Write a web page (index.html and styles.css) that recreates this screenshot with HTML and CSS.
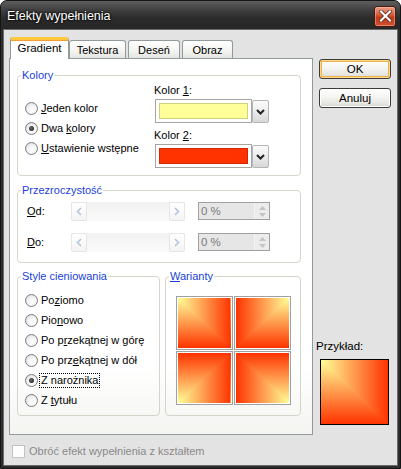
FILE: index.html
```html
<!DOCTYPE html>
<html lang="pl">
<head>
<meta charset="utf-8">
<title>Efekty wypełnienia</title>
<link rel="stylesheet" href="styles.css">
</head>
<body>
<div class="window">
  <div class="titlebar">
    <span class="title">Efekty wypełnienia</span>
    <button class="close" aria-label="Zamknij">
      <svg width="13" height="12" viewBox="0 0 13 12"><path d="M2 1.5 L11 10.5 M11 1.5 L2 10.5" stroke="#5a1a0c" stroke-width="3.6" stroke-linecap="square"/><path d="M2 1.5 L11 10.5 M11 1.5 L2 10.5" stroke="#fff" stroke-width="2.2" stroke-linecap="square"/></svg>
    </button>
  </div>
  <div class="client">
    <div class="main">
      <div class="left">
        <div class="tabs">
          <div class="tab active">Gradient</div>
          <div class="tab t2">Tekstura</div>
          <div class="tab t3">Deseń</div>
          <div class="tab t4">Obraz</div>
        </div>
        <div class="panel">
          <fieldset class="group kolory">
            <legend>Kolory</legend>
            <div class="kolory-body">
              <div class="radios">
                <div class="radio"><span class="dot"></span><span><u>J</u>eden kolor</span></div>
                <div class="radio"><span class="dot on"></span><span>Dwa <u>k</u>olory</span></div>
                <div class="radio"><span class="dot"></span><span><u>U</u>stawienie wstępne</span></div>
              </div>
              <div class="colors">
                <div class="clabel">Kolor <u>1</u>:</div>
                <div class="combo">
                  <div class="field"><span class="swatch yellow"></span></div>
                  <div class="drop"><svg width="9" height="6" viewBox="0 0 9 6"><path d="M1 1 L4.5 4.5 L8 1" fill="none" stroke="#222" stroke-width="2"/></svg></div>
                </div>
                <div class="clabel second">Kolor <u>2</u>:</div>
                <div class="combo">
                  <div class="field"><span class="swatch red"></span></div>
                  <div class="drop"><svg width="9" height="6" viewBox="0 0 9 6"><path d="M1 1 L4.5 4.5 L8 1" fill="none" stroke="#222" stroke-width="2"/></svg></div>
                </div>
              </div>
            </div>
          </fieldset>

          <fieldset class="group przez">
            <legend>Przezroczystość</legend>
            <div class="przez-body">
              <div class="trow">
                <span class="tlabel"><u>O</u>d:</span>
                <div class="scroll">
                  <span class="sbtn"><svg width="6" height="9" viewBox="0 0 6 9"><path d="M5 1 L1.5 4.5 L5 8" fill="none" stroke="#b4c4dc" stroke-width="1.6"/></svg></span>
                  <span class="strack"></span>
                  <span class="sbtn"><svg width="6" height="9" viewBox="0 0 6 9"><path d="M1 1 L4.5 4.5 L1 8" fill="none" stroke="#b4c4dc" stroke-width="1.6"/></svg></span>
                </div>
                <div class="spin">
                  <span class="spintext">0 %</span>
                  <span class="spinbtns">
                    <svg width="7" height="4" viewBox="0 0 7 4"><path d="M0 4 L3.5 0 L7 4 Z" fill="#c4c4c4"/></svg>
                    <svg width="7" height="4" viewBox="0 0 7 4"><path d="M0 0 L3.5 4 L7 0 Z" fill="#c4c4c4"/></svg>
                  </span>
                </div>
              </div>
              <div class="trow">
                <span class="tlabel"><u>D</u>o:</span>
                <div class="scroll">
                  <span class="sbtn"><svg width="6" height="9" viewBox="0 0 6 9"><path d="M5 1 L1.5 4.5 L5 8" fill="none" stroke="#b4c4dc" stroke-width="1.6"/></svg></span>
                  <span class="strack"></span>
                  <span class="sbtn"><svg width="6" height="9" viewBox="0 0 6 9"><path d="M1 1 L4.5 4.5 L1 8" fill="none" stroke="#b4c4dc" stroke-width="1.6"/></svg></span>
                </div>
                <div class="spin">
                  <span class="spintext">0 %</span>
                  <span class="spinbtns">
                    <svg width="7" height="4" viewBox="0 0 7 4"><path d="M0 4 L3.5 0 L7 4 Z" fill="#c4c4c4"/></svg>
                    <svg width="7" height="4" viewBox="0 0 7 4"><path d="M0 0 L3.5 4 L7 0 Z" fill="#c4c4c4"/></svg>
                  </span>
                </div>
              </div>
            </div>
          </fieldset>

          <div class="lower">
            <fieldset class="group style">
              <legend>Style cieniowania</legend>
              <div class="style-body">
                <div class="radio"><span class="dot"></span><span>Po<u>z</u>iomo</span></div>
                <div class="radio"><span class="dot"></span><span>Pio<u>n</u>owo</span></div>
                <div class="radio"><span class="dot"></span><span>Po p<u>r</u>zekątnej w górę</span></div>
                <div class="radio"><span class="dot"></span><span>Po prz<u>e</u>kątnej w dół</span></div>
                <div class="radio"><span class="dot on"></span><span class="focus">Z narożnika</span></div>
                <div class="radio"><span class="dot"></span><span>Z <u>t</u>ytułu</span></div>
              </div>
            </fieldset>
            <fieldset class="group warianty">
              <legend><u>W</u>arianty</legend>
              <div class="tiles">
                <div class="tile"><div class="corner"></div></div>
                <div class="tile"><div class="corner fx"></div></div>
                <div class="tile"><div class="corner fy"></div></div>
                <div class="tile"><div class="corner fxy"></div></div>
              </div>
            </fieldset>
          </div>
        </div>
      </div>
      <div class="side">
        <button class="btn default">OK</button>
        <button class="btn">Anuluj</button>
        <div class="sample-label">Przykład:</div>
        <div class="sample"><div class="corner"></div></div>
      </div>
    </div>
    <div class="footer">
      <span class="check"></span>
      <span class="checktext">Obróć efekt wypełnienia z kształtem</span>
    </div>
  </div>
</div>
</body>
</html>
```

FILE: styles.css
```css
html, body {
  margin: 0;
  padding: 0;
  background: #ffffff;
}

body {
  font-family: "Liberation Sans", Arial, sans-serif;
  font-size: 11px;
  color: #000;
}

.window {
  width: 401px;
  height: 469px;
  box-sizing: border-box;
  display: flex;
  flex-direction: column;
  background: #2c2c2c;
  border-radius: 7px 7px 0 0;
  border: 1px solid #151515;
}

.titlebar {
  height: 29px;
  display: flex;
  align-items: center;
  padding: 0 4px 0 6px;
  border-radius: 6px 6px 0 0;
  background: linear-gradient(to bottom, #5e5e5e 0, #3c3c3c 35%, #2b2b2b 60%, #262626 100%);
}

.title {
  flex: 1;
  color: #ffffff;
  font-size: 12.5px;
  text-shadow: 0 0 3px #000, 0 0 2px #000;
}

.close {
  width: 22px;
  height: 21px;
  padding: 0;
  margin-top: 1px;
  display: flex;
  align-items: center;
  justify-content: center;
  border: 1px solid #4a1a10;
  border-radius: 3px;
  background: linear-gradient(to bottom, #eaa08a 0, #d6603f 40%, #c03a1c 55%, #cf5030 100%);
  box-shadow: inset 0 0 0 1px rgba(255, 200, 180, 0.45);
}

.client {
  flex: 1;
  margin: 0 3px 3px;
  background: #e3e3e3;
  padding: 7px 5px 0;
  display: flex;
  flex-direction: column;
  box-shadow: 0 0 0 1px #6a6a6a;
}

.main {
  display: flex;
}

.left {
  width: 304px;
}

/* Tabs */
.tabs {
  display: flex;
  align-items: flex-end;
  height: 22px;
  margin-left: 1px;
  margin-bottom: -1px;
  position: relative;
  z-index: 1;
}

.tab {
  box-sizing: border-box;
  height: 18px;
  margin-bottom: 1px;
  border: 1px solid #919b9c;
  border-bottom: none;
  border-radius: 3px 3px 0 0;
  background: linear-gradient(to bottom, #ffffff 0, #f3f3f0 60%, #e4e4e0 100%);
  display: flex;
  align-items: center;
  justify-content: center;
  padding-top: 1px;
}

.tab.active {
  width: 59px;
  height: 22px;
  margin-bottom: 0;
  background: #ffffff;
  border-top: 3px solid #ffc83c;
  box-shadow: inset 0 1px 0 #f0a030;
  padding-top: 0;
  padding-bottom: 3px;
  font-size: 11.5px;
}

.t2 { width: 57px; margin-left: 0; }
.t3 { width: 52px; margin-left: 2px; }
.t4 { width: 51px; margin-left: 2px; }

.panel {
  box-sizing: border-box;
  height: 377px;
  border: 1px solid #919b9c;
  background: linear-gradient(to bottom, #ffffff 0, #ffffff 82%, #f4f4f1 100%);
  padding: 10px 11px 0 7px;
}

/* Group boxes */
.group {
  margin: 0;
  padding: 0;
  min-width: 0;
  border: 1px solid #d5d5cc;
  border-radius: 4px;
}

.group legend {
  padding: 0 1px;
  margin-left: 3px;
  line-height: 13px;
  height: 13px;
  color: #1a3fd8;
}

.kolory-body {
  display: flex;
  height: 93px;
}

.radios {
  width: 136px;
  box-sizing: border-box;
  padding: 16px 0 0 7px;
}

.radio {
  height: 20px;
  display: flex;
  align-items: center;
  gap: 3px;
}

.dot {
  width: 11px;
  height: 11px;
  border-radius: 50%;
  border: 1px solid #7c7c7c;
  background: radial-gradient(circle at 60% 65%, #ffffff 0, #f4f4f4 45%, #d4d4d4 100%);
  flex: none;
  position: relative;
  margin-top: 1px;
}

.dot.on::after {
  content: "";
  position: absolute;
  left: 3px;
  top: 3px;
  width: 5px;
  height: 5px;
  border-radius: 50%;
  background: radial-gradient(circle at 40% 40%, #6a6a6a 0, #1e1e1e 90%);
}

.colors {
  padding-top: 2px;
}

.clabel {
  height: 13px;
  line-height: 13px;
}

.clabel.second {
  margin-top: 6px;
}

.combo {
  display: flex;
  margin: 2px 0 0 1px;
  height: 24px;
}

.field {
  box-sizing: border-box;
  width: 97px;
  height: 24px;
  border: 1px solid #a6a6a6;
  background: #ffffff;
  padding: 3px;
}

.swatch {
  display: block;
  box-sizing: border-box;
  width: 100%;
  height: 16px;
  border: 1px solid rgba(0, 0, 0, 0.18);
}

.swatch.yellow { background: #ffff99; }
.swatch.red { background: #ff3300; }

.drop {
  box-sizing: border-box;
  width: 17px;
  height: 23px;
  margin: 1px 0 0 0;
  border: 1px solid #b5b5b5;
  border-radius: 2px;
  background: linear-gradient(to bottom, #fbfbfb 0, #ececec 50%, #d8d8d8 100%);
  display: flex;
  align-items: center;
  justify-content: center;
}

/* Transparency */
.przez {
  margin-top: 8px;
}

.przez-body {
  padding: 4px 0 10px 9px;
  display: flex;
  flex-direction: column;
  gap: 11px;
}

.trow {
  height: 20px;
  display: flex;
  align-items: center;
}

.tlabel {
  width: 44px;
}

.scroll {
  box-sizing: border-box;
  width: 114px;
  height: 19px;
  display: flex;
  background: linear-gradient(to bottom, #f2f2f2, #fafafa);
}

.strack {
  flex: 1;
}

.sbtn {
  box-sizing: border-box;
  width: 16px;
  height: 19px;
  border: 1px solid #e6e6e6;
  border-radius: 2px;
  background: linear-gradient(to bottom, #ffffff, #f4f4f4);
  display: flex;
  align-items: center;
  justify-content: center;
}

.spin {
  box-sizing: border-box;
  width: 72px;
  height: 18px;
  margin-left: 13px;
  border: 1px solid #a0a0a0;
  background: #e6e6e6;
  display: flex;
  align-items: center;
}

.spintext {
  flex: 1;
  padding-left: 2px;
  color: #7c7c7c;
  font-size: 11.5px;
}

.spinbtns {
  box-sizing: border-box;
  width: 15px;
  height: 16px;
  border-left: 1px solid #f4f4f4;
  background: #ececec;
  display: flex;
  flex-direction: column;
  align-items: center;
  justify-content: center;
  gap: 3px;
}

/* Lower groups */
.lower {
  display: flex;
  margin-top: 7px;
}

.style {
  width: 143px;
  box-sizing: border-box;
}

.style-body {
  padding: 7px 0 5px 7px;
}

.focus {
  outline: 1px dotted #000;
  outline-offset: 0;
  padding: 0 1px;
  line-height: 13px;
  margin-left: -1px;
}

.warianty {
  width: 136px;
  box-sizing: border-box;
  margin-left: 5px;
}

.tiles {
  display: grid;
  grid-template-columns: 57px 57px;
  grid-auto-rows: 54px;
  gap: 1px;
  justify-content: center;
  margin-top: 13px;
}

.tile {
  box-sizing: border-box;
  border: 1px solid #a0a0a0;
  padding: 1px;
  background: #ffffff;
}

.corner {
  position: relative;
  width: 100%;
  height: 100%;
  background: linear-gradient(to bottom, #ffff99, #ff3300);
}

.corner::after {
  content: "";
  position: absolute;
  inset: 0;
  background: linear-gradient(to right, #ffff99, #ff3300);
  clip-path: polygon(0 0, 100% 0, 100% 100%);
}

.fx { transform: scaleX(-1); }
.fy { transform: scaleY(-1); }
.fxy { transform: scale(-1, -1); }

/* Side */
.side {
  flex: 1;
  display: flex;
  flex-direction: column;
  padding-top: 22px;
}

.btn {
  box-sizing: border-box;
  width: 72px;
  height: 20px;
  margin-left: 6px;
  padding: 0;
  font-family: inherit;
  font-size: 11.5px;
  color: #000;
  border: 1px solid #3c3c3c;
  border-radius: 3px;
  background: linear-gradient(to bottom, #ffffff 0, #f4f4f2 45%, #e6e6e2 80%, #d6d6d0 100%);
  box-shadow: inset 0 0 0 1px #ffffff;
}

.btn + .btn {
  margin-top: 9px;
}

.btn.default {
  box-shadow: inset 0 0 0 1px #ffd98c, inset 0 0 0 2px #f2b04a;
}

.sample-label {
  margin: 232px 0 0 3px;
  height: 13px;
  line-height: 13px;
  font-size: 11.5px;
}

.sample {
  box-sizing: border-box;
  width: 69px;
  height: 66px;
  margin: 6px 0 0 7px;
  border: 1px solid #000;
}

/* Footer */
.footer {
  margin-top: 9px;
  display: flex;
  align-items: center;
  height: 14px;
}

.check {
  box-sizing: border-box;
  width: 13px;
  height: 13px;
  margin-left: 3px;
  border: 1px solid #c2c2c2;
  background: #fdfdfd;
}

.checktext {
  margin-left: 4px;
  color: #8a8a8a;
  font-size: 11px;
}
```
